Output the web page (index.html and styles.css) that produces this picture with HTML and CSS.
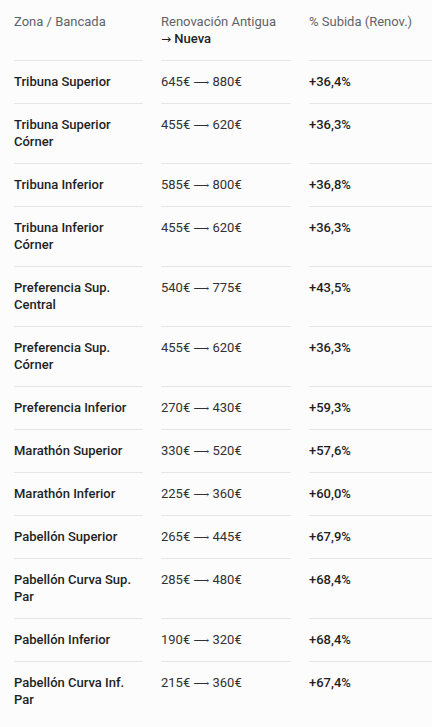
FILE: index.html
```html
<!DOCTYPE html>
<html lang="es">
<head>
    <meta charset="utf-8">
    <title>Subida de abonos</title>
    <link rel="stylesheet" href="styles.css">
</head>
<body>
    <div class="wrap">
        <div class="tabla">
            <div class="cab">Zona / Bancada</div>
            <div class="cab">Renovación Antigua <b class="nueva"><span class="flecha-cab">→</span> Nueva</b></div>
            <div class="cab">% Subida (Renov.)</div>

            <div class="zona">Tribuna Superior</div>
            <div class="precio">645€ <span class="flecha">⟶</span> 880€</div>
            <div class="pct">+36,4%</div>

            <div class="zona">Tribuna Superior Córner</div>
            <div class="precio">455€ <span class="flecha">⟶</span> 620€</div>
            <div class="pct">+36,3%</div>

            <div class="zona">Tribuna Inferior</div>
            <div class="precio">585€ <span class="flecha">⟶</span> 800€</div>
            <div class="pct">+36,8%</div>

            <div class="zona">Tribuna Inferior Córner</div>
            <div class="precio">455€ <span class="flecha">⟶</span> 620€</div>
            <div class="pct">+36,3%</div>

            <div class="zona">Preferencia Sup. Central</div>
            <div class="precio">540€ <span class="flecha">⟶</span> 775€</div>
            <div class="pct">+43,5%</div>

            <div class="zona">Preferencia Sup. Córner</div>
            <div class="precio">455€ <span class="flecha">⟶</span> 620€</div>
            <div class="pct">+36,3%</div>

            <div class="zona">Preferencia Inferior</div>
            <div class="precio">270€ <span class="flecha">⟶</span> 430€</div>
            <div class="pct">+59,3%</div>

            <div class="zona">Marathón Superior</div>
            <div class="precio">330€ <span class="flecha">⟶</span> 520€</div>
            <div class="pct">+57,6%</div>

            <div class="zona">Marathón Inferior</div>
            <div class="precio">225€ <span class="flecha">⟶</span> 360€</div>
            <div class="pct">+60,0%</div>

            <div class="zona">Pabellón Superior</div>
            <div class="precio">265€ <span class="flecha">⟶</span> 445€</div>
            <div class="pct">+67,9%</div>

            <div class="zona">Pabellón Curva Sup. Par</div>
            <div class="precio">285€ <span class="flecha">⟶</span> 480€</div>
            <div class="pct">+68,4%</div>

            <div class="zona">Pabellón Inferior</div>
            <div class="precio">190€ <span class="flecha">⟶</span> 320€</div>
            <div class="pct">+68,4%</div>

            <div class="zona ultima">Pabellón Curva Inf. Par</div>
            <div class="precio ultima">215€ <span class="flecha">⟶</span> 360€</div>
            <div class="pct ultima">+67,4%</div>
        </div>
    </div>
</body>
</html>
```

FILE: styles.css
```css
body
{
    margin: 0;
    background-color: #fcfcfc;
    font-family: Roboto, "Noto Sans", sans-serif;
    font-size: 13px;
    line-height: 17px;
    color: #1f1f1f;
}
.wrap
{
    width: 432px;
    height: 727px;
    padding-top: 1px;
    box-sizing: border-box;
    overflow: hidden;
}
.tabla
{
    display: grid;
    grid-template-columns: 129px 130px 130px;
    column-gap: 18px;
    padding-left: 14px;
}
.tabla div
{
    padding: 12px 0 13px;
    border-bottom: 1px solid #e6e6e6;
}
.tabla .ultima
{
    border-bottom: none;
}
.cab
{
    color: #5f6368;
}
.nueva
{
    display: block;
    font-weight: 500;
    color: #1f1f1f;
}
.flecha-cab
{
    font-family: "DejaVu Sans", sans-serif;
    font-size: 12px;
    line-height: 0;
}
.zona, .pct
{
    font-weight: 500;
}
.precio
{
    color: #303134;
}
.flecha
{
    font-family: "DejaVu Serif", serif;
    font-size: 11px;
    line-height: 0;
}
```
